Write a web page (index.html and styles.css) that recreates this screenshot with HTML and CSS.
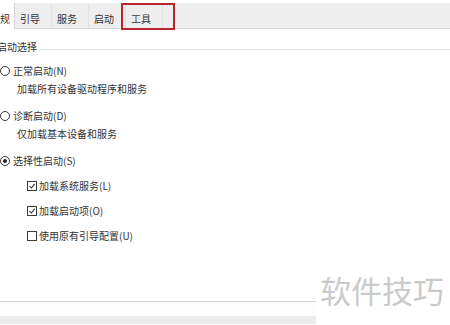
FILE: index.html
```html
<!DOCTYPE html>
<html lang="zh-CN">
  <head>
    <meta charset="UTF-8" />
    <title>系统配置</title>
    <link rel="stylesheet" href="styles.css">
  </head>
  <body>
    <!-- Tab strip -->
    <div class="tabs">
      <div class="tab active">常规</div>
      <div class="tab">引导</div>
      <div class="tab">服务</div>
      <div class="tab">启动</div>
      <div class="tab marked">工具</div>
    </div>

    <div class="page">
      <div class="group-title"><span>启动选择</span></div>

      <div class="radio first"><i class="dot"></i>正常启动(N)</div>
      <div class="sub">加载所有设备驱动程序和服务</div>

      <div class="radio"><i class="dot"></i>诊断启动(D)</div>
      <div class="sub">仅加载基本设备和服务</div>

      <div class="radio"><i class="dot on"></i>选择性启动(S)</div>
      <div class="check">
        <i class="box"><svg viewBox="0 0 10 10"><polyline points="1.8,5 4.2,7.4 8.4,2.4" /></svg></i>加载系统服务(L)
      </div>
      <div class="check">
        <i class="box"><svg viewBox="0 0 10 10"><polyline points="1.8,5 4.2,7.4 8.4,2.4" /></svg></i>加载启动项(O)
      </div>
      <div class="check"><i class="box"></i>使用原有引导配置(U)</div>

      <div class="footer"></div>
      <div class="bar"></div>
    </div>

    <div class="watermark">软件技巧</div>
  </body>
</html>
```

FILE: styles.css
```css
/* Base */
* {
  margin: 0;
  padding: 0;
  box-sizing: border-box;
}

body {
  font-family: "Noto Sans CJK SC", "Noto Sans", sans-serif;
  font-size: 10px;
  color: #333333;
  background: #ffffff;
  overflow: hidden;
}

/* Tabs */
.tabs {
  display: flex;
  margin-top: 3px;
  height: 26px;
  background: #eeeeee;
  border-bottom: 1px solid #d6d6d6;
}

.tab {
  padding: 9px 11px 2px 5px;
  line-height: 14px;
  border-right: 1px solid #e2e2e2;
}

.tab.active {
  margin-left: -14px;
  padding-left: 4px;
  padding-right: 4px;
  height: 26px;
  background: #ffffff;
  border-right: 1px solid #d6d6d6;
}

.tab.marked {
  position: relative;
}

/* red annotation box round the tab */
.tab.marked::after {
  content: "";
  position: absolute;
  left: -5px;
  right: -13px;
  top: 0;
  bottom: -2px;
  border: 2px solid #b8262c;
}

/* Page */
.page {
  display: flex;
  flex-direction: column;
}

.group-title {
  display: flex;
  margin-top: 11px;
  margin-left: -3px;
  line-height: 14px;
}

.group-title::after {
  content: "";
  flex: 1;
  margin-left: 3px;
  margin-top: 9px;
  border-top: 1px solid #dedede;
}

.radio,
.check,
.sub {
  display: flex;
  align-items: center;
  line-height: 14px;
}

.radio {
  margin-top: 13px;
}

.radio.first {
  margin-top: 10px;
}

.sub {
  margin-top: 4px;
  padding-left: 17px;
}

.check {
  margin-top: 11px;
  padding-left: 27px;
}

.dot {
  display: flex;
  align-items: center;
  justify-content: center;
  width: 10px;
  height: 10px;
  margin-right: 3px;
  border: 1px solid #3a3a3a;
  border-radius: 50%;
}

.dot.on::after {
  content: "";
  width: 4px;
  height: 4px;
  border-radius: 50%;
  background: #222;
}

.box {
  display: block;
  width: 10px;
  height: 10px;
  margin-right: 2px;
  border: 1px solid #3a3a3a;
}

.box svg {
  display: block;
  width: 8px;
  height: 8px;
}

.box polyline {
  fill: none;
  stroke: #333;
  stroke-width: 1.3;
}

.footer {
  margin-top: 58px;
  height: 15px;
  border-top: 1px solid #d2d2d2;
  background: #fdfdfd;
}

.bar {
  height: 8px;
  background: #ececec;
}

/* Watermark sits over the bottom right corner */
.watermark {
  position: absolute;
  right: 0;
  bottom: 0;
  width: 134px;
  height: 55px;
  padding: 4px 0 0 4px;
  background: #ffffff;
  font-size: 31px;
  line-height: 31px;
  color: #cacaca;
}
```
